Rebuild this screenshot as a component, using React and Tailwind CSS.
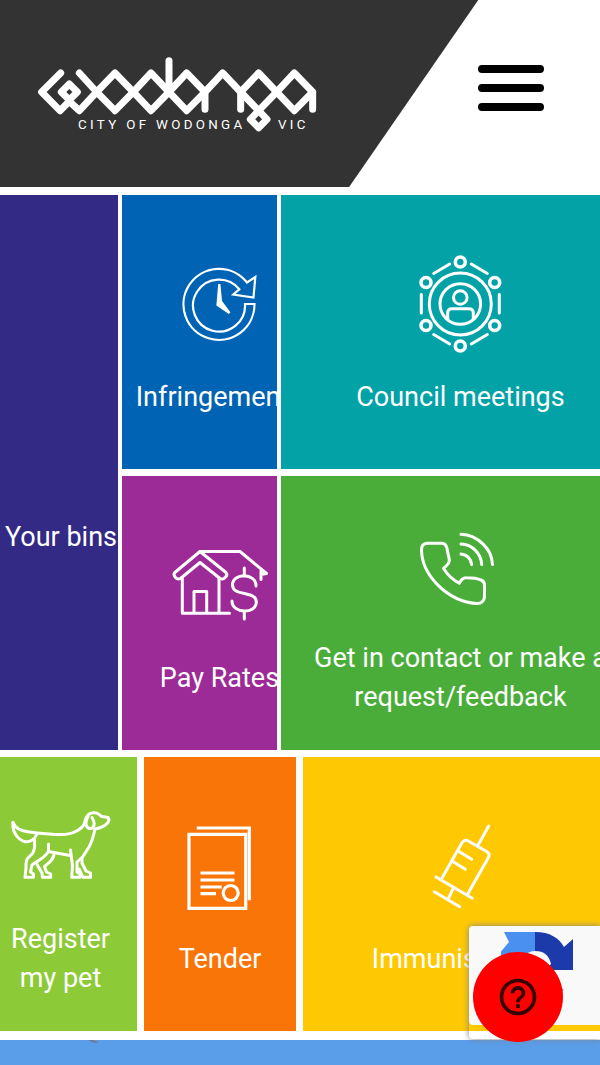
import clsx from "clsx";
import { MdHelpOutline } from "react-icons/md";

function Logo() {
  return (
    <svg viewBox="54 48 840 228" className="w-[280px] h-[76px]" role="img" aria-label="City of Wodonga">
      <g fill="none" stroke="#fff" strokeWidth="21" strokeLinecap="round" strokeLinejoin="round">
        <path d="M122 99L65 156L120 212L148 184M178 99L230 156L178 212L148 184" />
        <path d="M148 132L172 156L148 180L124 156Z" />
        <path d="M285 99L340 156L285 212L230 156Z" />
        <path d="M393 99L447 156L393 212L340 156Z" />
        <path d="M500 99L555 156L500 212L447 156Z" />
        <path d="M447 62V156M555 208V156L608 99L662 156V208" />
        <path d="M716 99L770 156L716 212L662 156Z" />
        <path d="M716 212L741 238L716 263L691 238Z" />
        <path d="M823 99L878 156L823 212L770 156ZM878 156V208" />
      </g>
      <g fill="#fff" fontFamily="Roboto, sans-serif" fontSize="40" fontWeight="400" letterSpacing="10">
        <text x="174" y="268">CITY OF WODONGA</text>
        <text x="774" y="268">VIC</text>
      </g>
    </svg>
  );
}

function TileIcon({ children }) {
  return (
    <svg
      viewBox="0 0 100 100"
      className="size-[100px] shrink-0"
      fill="none"
      stroke="#fff"
      strokeWidth="3"
      strokeLinecap="round"
      strokeLinejoin="round"
      aria-hidden="true"
    >
      {children}
    </svg>
  );
}

const icons = {
  clock: (
    <g strokeWidth="2.2" strokeLinejoin="miter">
      <path d="M84.5 50H75A26 26 0 1 1 69.3 35.3L63.3 40.5L83.5 43.5L85.3 23L77 28.5A35.5 35.5 0 1 0 84.5 50Z" />
      <path d="M49.3 30L51 47.5L59.5 59L47.5 51Z" fill="#fff" />
    </g>
  ),
  council: (
    <>
      <circle cx="49.3" cy="50" r="31" />
      <circle cx="49.3" cy="50" r="20.3" />
      <circle cx="49.3" cy="43.5" r="6.8" />
      <path d="M36.7 65V59Q36.7 54.7 41 54.7H57.7Q62.3 54.7 62.3 59V65" />
      <g strokeWidth="3.6">
        <circle cx="49.3" cy="8" r="5" />
        <circle cx="49.3" cy="92" r="5" />
        <circle cx="15" cy="28.5" r="5" />
        <circle cx="15" cy="71.5" r="5" />
        <circle cx="83.7" cy="28.5" r="5" />
        <circle cx="83.7" cy="71.5" r="5" />
      </g>
      <path d="M22.7 19.5L38.7 10M60.3 10L76.3 19.5M10.3 40.5V59M88.3 40.5V59M22.7 80.5L38.7 90M60.3 90L76.3 80.5" />
    </>
  ),
  house: (
    <>
      <path d="M30 16.5L4.8 37.5C2.5 40 6.5 45.5 10.5 43.5L30 27.5L50 43.5C54 45.5 58.5 40 56 37.5Z" />
      <path d="M12.3 43V78.2H59.5M49 43V78.2M24 78.2V56.5H36.7V78.2" />
      <path d="M30 16.5H70L96.5 38.5L91 39.5V44.5M91 44V36" />
      <path d="M74.3 33V41M74.3 76V84M86 51C86 37.5 62.5 37.5 62.5 50C62.5 62 86.3 55 86.3 67C86.3 79.5 62 79 62 66" />
    </>
  ),
  phone: (
    <>
      <path d="M16 28.2H31Q35 28.5 36 33.5C37 40 38.5 43 38.3 46C38 50 34.5 51 32.5 53.5C36 59 42 65 48.3 68.2C50 65 52 62.5 55 62.7C62 62.7 67 63.5 70 65Q73.5 66.5 73.5 70V81C73.5 86 70 89 65 88.5C37 86 11 61 10.5 35Q10.5 28.5 16 28.2Z" />
      <path d="M50 19.2C67 20 81 34 81.5 49.5M50 29C61 29.5 70 38 70.7 49.5M50 39C56 39.5 60 44 60.7 49.5" />
    </>
  ),
  dog: (
    <>
      <path d="M2 26.5C4 33 10 35 18 36C32 37.5 42 39 55 38.3C64 37.5 72 32 73.5 27C75 19 79 16 84 16.8C88 17 89 20 91 20.5L97 21.5Q99 24 96.5 27C94 30 89 32 84 33C82 42 81 46 78 51L71 62V67L75 75L79.5 77V81.3H72L68 73" />
      <path d="M2 26.5C1 36 7 44 14 45.7C19 46.5 24 43 26 38" />
      <path d="M23.5 44C24 50 24 54 21.5 57.5L16 63Q14.5 67 15 72L14 81.3H22.5V78L19.5 76L21 69C25 65 32 64 37.5 55.5" />
      <path d="M26 68.5L31 77L31.5 81.3H39.7V78L35.5 76L33.5 70.5C38 66 41 66 43 59" />
      <path d="M37.5 48V55.5L59 59.5M59.5 54L61.5 70L60.7 81.3H69V78L66 76V66L71 61.5" />
      <path d="M77 20.5C74 26 74 31 78.5 32.5C83 33 85 28 81 21.5" />
    </>
  ),
  tender: (
    <g strokeLinecap="butt" strokeLinejoin="miter" strokeWidth="3.2">
      <path d="M19 18.3H75.7V92.3H19ZM26.7 12H79.3V84.3" />
      <path d="M30.5 57H64.5M30.5 64H64.5M30.5 71H51.7M30.5 77.7H46" />
      <circle cx="60.7" cy="77" r="7.5" />
    </g>
  ),
  syringe: (
    <>
      <path d="M76.7 10L65.7 29.7M30 62L50 26.7Q52.5 22.8 56.3 25L75 35.7Q78.5 38 76.3 41.7L55.7 78" />
      <path d="M24 61L60.3 82.3M41.7 71.7L36.3 82.7M22.3 75.7L47.7 90.7M46.5 35.3L59.7 43.3M40.5 45.3L53.3 53.3" />
    </>
  ),
};

const mainTiles = [
  { label: "Your bins", color: "bg-[#332a86] row-span-2", inset: "-mr-1" },
  { label: "Infringements", icon: "clock", color: "bg-[#0063b4]", inset: "-mr-10" },
  { label: "Council meetings", icon: "council", color: "bg-[#02a2a7]", inset: "-mr-10" },
  { label: "Pay Rates", icon: "house", color: "bg-[#9c2b97]", inset: "-mr-10" },
  { label: "Get in contact or make a request/feedback", icon: "phone", color: "bg-[#4aad3a]", inset: "-mr-10" },
];

const moreTiles = [
  { label: "Register my pet", icon: "dog", color: "bg-[#8dca37]", inset: "-ml-4 px-5" },
  { label: "Tender", icon: "tender", color: "bg-[#f97508]", inset: "mr-0" },
  { label: "Immunisations", icon: "syringe", color: "bg-[#fec903]", inset: "-mr-5" },
];

function Tile({ label, icon, color, inset }) {
  return (
    <a href="#" className={clsx("flex flex-col justify-center overflow-hidden pt-1.5 text-white", color)}>
      <div className={clsx("flex flex-col items-center gap-6 text-center", inset)}>
        <TileIcon>{icons[icon]}</TileIcon>
        <span className="text-[27px] leading-[39px]">{label}</span>
      </div>
    </a>
  );
}

export default function App() {
  return (
    <div className="min-h-screen overflow-x-hidden bg-white font-[Roboto,sans-serif]">
      <header className="flex h-[195px] items-start justify-between">
        <div className="h-[187px] w-4/5 bg-[#333] pl-[38px] pt-14 [clip-path:polygon(0_0,100%_0,73%_100%,0_100%)]">
          <a href="#" className="block">
            <Logo />
          </a>
        </div>
        <button type="button" aria-label="Menu" className="mr-14 mt-[65px] flex w-[66px] flex-col gap-[11px]">
          <span className="h-2 w-full rounded-full bg-black" />
          <span className="h-2 w-full rounded-full bg-black" />
          <span className="h-2 w-full rounded-full bg-black" />
        </button>
      </header>

      <main className="flex flex-col gap-[7px]">
        <div className="grid auto-rows-[274px] grid-cols-[118fr_155fr_319fr] gap-x-1 gap-y-[7px]">
          {mainTiles.map((tile) => (
            <Tile key={tile.label} {...tile} />
          ))}
        </div>
        <div className="grid auto-rows-[274px] grid-cols-[137fr_152fr_297fr] gap-[7px]">
          {moreTiles.map((tile) => (
            <Tile key={tile.label} {...tile} />
          ))}
        </div>
      </main>

      <section className="mt-[9px] h-[25px] bg-[#5a9de9] pl-[88px]">
        <svg viewBox="0 0 12 4" className="h-1 w-3" aria-hidden="true">
          <path d="M0 0H6L11 2.5L6 3Z" fill="#6d7f96" />
        </svg>
      </section>

      {/* reCAPTCHA badge */}
      <div className="fixed bottom-[26px] right-0 h-[113px] w-[131px] rounded-l-sm shadow-[0_0_6px_#808080]">
        <div className="h-[99px] rounded-l-sm bg-[#f9f9f9] pl-8 pt-1.5">
          <svg viewBox="0 0 72 72" className="size-[72px]" aria-hidden="true">
            <path d="M34 0V19C27 19 21 24 20 31L8 38L-2 30V22L8 10L3 0Z" fill="#4a90f0" />
            <path d="M34 0C49 0 58 6 63 15L72 7V38H44L50 32C48 23 43 19 34 19Z" fill="#1c3aa9" />
            <path d="M0 36H28L19 45Q27 55 36 55Q46 55 52 47L63 58Q52 72 36 72Q20 72 9 59L0 67Z" fill="#ababab" />
          </svg>
        </div>
      </div>

      <button
        type="button"
        aria-label="Help"
        className="fixed bottom-[23px] right-[37px] flex size-[90px] items-center justify-center rounded-full bg-[#f00] text-[#300]"
      >
        <MdHelpOutline className="size-11" />
      </button>
    </div>
  );
}
